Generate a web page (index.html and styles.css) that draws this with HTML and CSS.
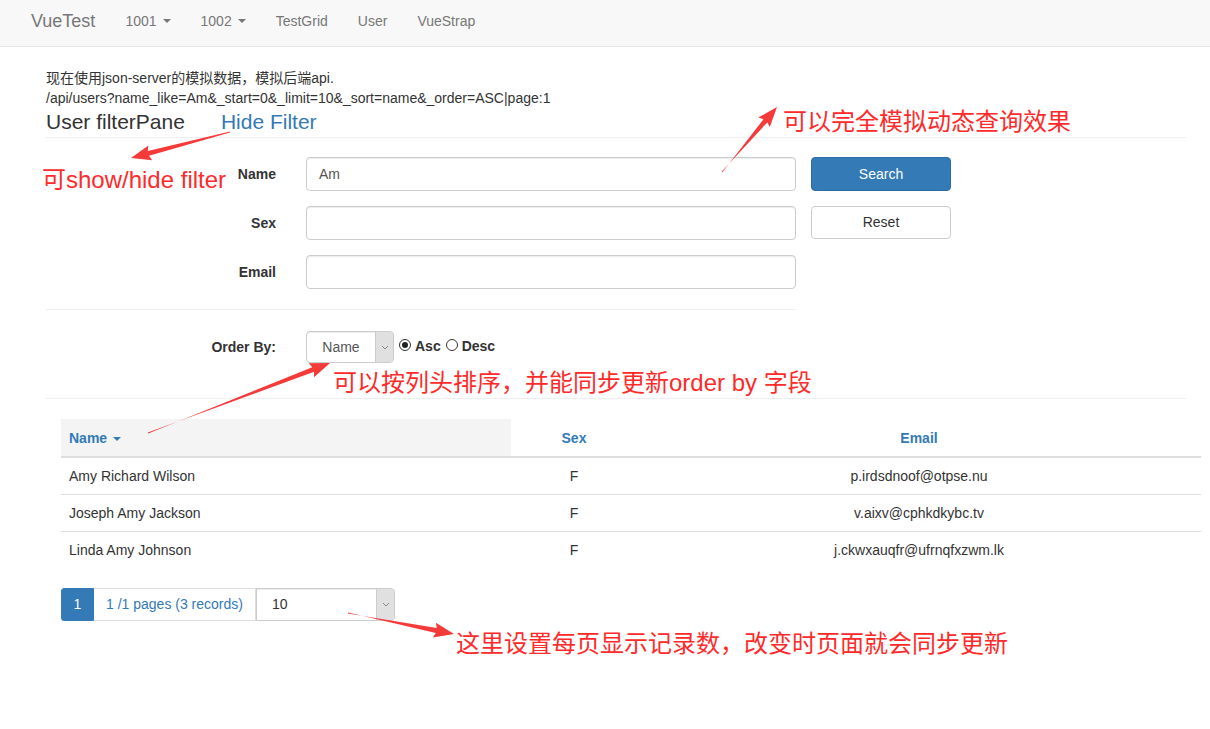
FILE: index.html
```html
<!DOCTYPE html>
<html lang="zh">
<head>
<meta charset="utf-8">
<title>VueTest</title>
<link rel="stylesheet" href="styles.css">
</head>
<body>
<nav class="navbar">
  <span class="brand">VueTest</span>
  <span class="nav-item">1001 <span class="caret"></span></span>
  <span class="nav-item">1002 <span class="caret"></span></span>
  <span class="nav-item">TestGrid</span>
  <span class="nav-item">User</span>
  <span class="nav-item">VueStrap</span>
</nav>

<main class="page">
  <p class="intro">现在使用json-server的模拟数据，模拟后端api.</p>
  <p class="intro">/api/users?name_like=Am&amp;_start=0&amp;_limit=10&amp;_sort=name&amp;_order=ASC|page:1</p>
  <div class="title-row">
    <span class="title">User filterPane</span>
    <span class="title link">Hide Filter</span>
  </div>
  <hr class="rule full">

  <div class="form">
    <div class="form-row">
      <label class="label">Name</label>
      <div class="input">Am</div>
      <button class="btn btn-primary">Search</button>
    </div>
    <div class="form-row">
      <label class="label">Sex</label>
      <div class="input"></div>
      <button class="btn btn-default">Reset</button>
    </div>
    <div class="form-row">
      <label class="label">Email</label>
      <div class="input"></div>
    </div>
  </div>
  <hr class="rule short">

  <div class="order-row">
    <label class="label">Order By:</label>
    <div class="select select-order">
      <span class="select-text">Name</span>
      <span class="select-btn"><svg width="8" height="5" viewBox="0 0 8 5"><path d="M1 1 L4 4 L7 1" fill="none" stroke="#888" stroke-width="1"/></svg></span>
    </div>
    <span class="radio checked"></span><span class="radio-label">Asc</span>
    <span class="radio"></span><span class="radio-label">Desc</span>
  </div>
  <hr class="rule full rule-table">

  <table class="grid">
    <thead>
      <tr>
        <th class="col-name sorted">Name <span class="caret caret-blue"></span></th>
        <th class="col-sex">Sex</th>
        <th class="col-email">Email</th>
      </tr>
    </thead>
    <tbody>
      <tr><td class="col-name">Amy Richard Wilson</td><td class="col-sex">F</td><td class="col-email">p.irdsdnoof@otpse.nu</td></tr>
      <tr><td class="col-name">Joseph Amy Jackson</td><td class="col-sex">F</td><td class="col-email">v.aixv@cphkdkybc.tv</td></tr>
      <tr><td class="col-name">Linda Amy Johnson</td><td class="col-sex">F</td><td class="col-email">j.ckwxauqfr@ufrnqfxzwm.lk</td></tr>
    </tbody>
  </table>

  <div class="pager">
    <span class="page-box active">1</span>
    <span class="page-box info">1 /1 pages (3 records)</span>
    <div class="select select-size">
      <span class="select-text">10</span>
      <span class="select-btn"><svg width="8" height="5" viewBox="0 0 8 5"><path d="M1 1 L4 4 L7 1" fill="none" stroke="#888" stroke-width="1"/></svg></span>
    </div>
  </div>
</main>

<div class="notes">
  <svg class="arrows" width="1210" height="729" viewBox="0 0 1210 729">
    <polygon points="230,131.5 147.8,151.0 148.4,145.6 131,158 152.2,160.2 149.0,155.8 230,132.5" />
    <polygon points="721.6,171.7 767.3,122.4 769.8,127.1 777,107 758.4,117.5 763.5,119.2 722.4,172.3" />
    <polygon points="147.8,432.5 314.1,371.8 314.0,377.2 330,363 308.6,363.2 312.3,367.2 148.2,433.5" />
    <polygon points="348.1,612.5 435.8,633.0 432.9,637.5 454,634 435.9,622.7 436.8,628.0 347.9,613.5" />
  </svg>
  <span class="note note-filter">可show/hide filter</span>
  <span class="note note-query">可以完全模拟动态查询效果</span>
  <span class="note note-order">可以按列头排序，并能同步更新order by 字段</span>
  <span class="note note-size">这里设置每页显示记录数，改变时页面就会同步更新</span>
</div>
</body>
</html>
```

FILE: styles.css
```css
* { box-sizing: border-box; }

body {
  margin: 0;
  font-family: "Liberation Sans", Arial, "Noto Sans CJK SC", sans-serif;
  font-size: 14px;
  color: #333;
  background: #fff;
  position: relative;
  width: 1210px;
  height: 729px;
  overflow: hidden;
}

/* navbar */
.navbar {
  height: 47px;
  background: #f8f8f8;
  border-bottom: 1px solid #e7e7e7;
  display: flex;
  align-items: flex-start;
  color: #777;
}
.brand {
  font-size: 18px;
  padding: 0 15px 0 31px;
  line-height: 42px;
}
.nav-item {
  padding: 0 15px;
  line-height: 42px;
  height: 42px;
  display: flex;
  align-items: center;
  gap: 4px;
}
.caret {
  display: inline-block;
  width: 0;
  height: 0;
  border-left: 4px solid transparent;
  border-right: 4px solid transparent;
  border-top: 4px solid #777;
  margin-left: 2px;
}
.caret-blue { border-top-color: #337ab7; vertical-align: middle; }

/* page */
.page {
  padding: 21px 24px 0 46px;
}
.intro {
  margin: 0;
  font-size: 14px;
  line-height: 20px;
}
.title-row {
  display: flex;
  gap: 36px;
  margin-top: 0;
  height: 28px;
  align-items: center;
}
.title {
  font-size: 21px;
  line-height: 28px;
}
.title.link { color: #337ab7; }

.rule {
  border: 0;
  border-top: 1px solid #eee;
  margin: 0;
  height: 0;
}
.rule.full { width: 1140px; margin-top: 1px; }
.rule.short { width: 750px; margin-top: 20px; }
.rule.rule-table { margin-top: 35px; }

/* form */
.form {
  display: flex;
  flex-direction: column;
  gap: 15px;
  margin-top: 19px;
}
.form-row {
  display: flex;
  align-items: center;
  height: 34px;
}
.label {
  width: 230px;
  text-align: right;
  font-weight: bold;
  font-size: 14px;
  margin-right: 30px;
}
.input {
  width: 490px;
  height: 34px;
  border: 1px solid #ccc;
  border-radius: 4px;
  box-shadow: inset 0 1px 1px rgba(0,0,0,.075);
  padding: 0 12px;
  line-height: 32px;
  font-size: 14px;
  color: #555;
}
.btn {
  margin-left: 15px;
  width: 140px;
  height: 34px;
  border-radius: 4px;
  font-family: inherit;
  font-size: 14px;
  border: 1px solid #ccc;
  background: #fff;
  color: #333;
  padding: 0;
}
.btn-primary {
  background: #337ab7;
  border-color: #2e6da4;
  color: #fff;
}
.form-row:nth-child(2) .btn { margin-top: -2px; height: 33px; }

/* order by */
.order-row {
  display: flex;
  align-items: center;
  height: 32px;
  margin-top: 21px;
}
.select {
  display: flex;
  height: 32px;
  border: 1px solid #ccc;
  border-radius: 4px;
  overflow: hidden;
  box-shadow: inset 0 1px 1px rgba(0,0,0,.075);
  background: #fff;
}
.select-order { width: 88px; }
.select-order .select-text {
  flex: 1;
  text-align: center;
  line-height: 30px;
  font-size: 14px;
  color: #555;
}
.select-btn {
  width: 18px;
  background: #e0e0e0;
  border-left: 1px solid #ccc;
  display: flex;
  align-items: center;
  justify-content: center;
}
.radio {
  width: 12px;
  height: 12px;
  border: 1px solid #333;
  border-radius: 50%;
  margin: -4px 0 0 5px;
  position: relative;
  background: #fff;
}
.radio.checked::after {
  content: "";
  position: absolute;
  left: 2px;
  top: 2px;
  width: 6px;
  height: 6px;
  border-radius: 50%;
  background: #222;
}
.radio-label {
  font-weight: bold;
  font-size: 14px;
  margin: -3px 0 0 4px;
}

/* table */
.grid {
  margin: 20px 0 0 15px;
  width: 1140px;
  border-collapse: collapse;
  font-size: 14px;
}
.grid th {
  height: 38px;
  font-weight: bold;
  font-size: 14px;
  color: #337ab7;
  border-bottom: 2px solid #ddd;
  padding: 0 8px;
}
.grid td {
  height: 37px;
  border-top: 1px solid #ddd;
  padding: 0 8px;
}
.grid .col-name { width: 450px; text-align: left; }
.grid .col-sex { width: 126px; text-align: center; }
.grid .col-email { text-align: center; }
.grid th.sorted { background: #f4f4f4; }

/* pager */
.pager {
  display: flex;
  margin: 20px 0 0 15px;
  height: 33px;
}
.page-box {
  height: 33px;
  line-height: 31px;
  border: 1px solid #ddd;
  font-size: 14px;
  color: #337ab7;
  padding: 0 12px;
}
.page-box.active {
  width: 33px;
  padding: 0;
  text-align: center;
  background: #337ab7;
  border-color: #337ab7;
  color: #fff;
  border-radius: 3px 0 0 3px;
}
.page-box.info { width: 162px; border-left: 0; }
.select-size {
  width: 139px;
  height: 33px;
  border-radius: 0 4px 4px 0;
}
.select-size .select-text {
  flex: 1;
  padding-left: 15px;
  line-height: 31px;
  font-size: 14px;
  color: #333;
}

/* annotations overlay */
.notes {
  position: absolute;
  left: 0;
  top: 0;
  width: 1210px;
  height: 729px;
  pointer-events: none;
}
.arrows { position: absolute; left: 0; top: 0; }
.arrows polygon { fill: #f53a3a; }
.note {
  position: absolute;
  font-family: "Liberation Sans", "Noto Sans CJK SC", sans-serif;
  font-size: 24px;
  line-height: 30px;
  color: #ff2a2a;
  white-space: nowrap;
}
.note-filter { left: 42px; top: 165px; }
.note-query { left: 783px; top: 107px; }
.note-order { left: 333px; top: 368px; }
.note-size { left: 456px; top: 629px; }
```
